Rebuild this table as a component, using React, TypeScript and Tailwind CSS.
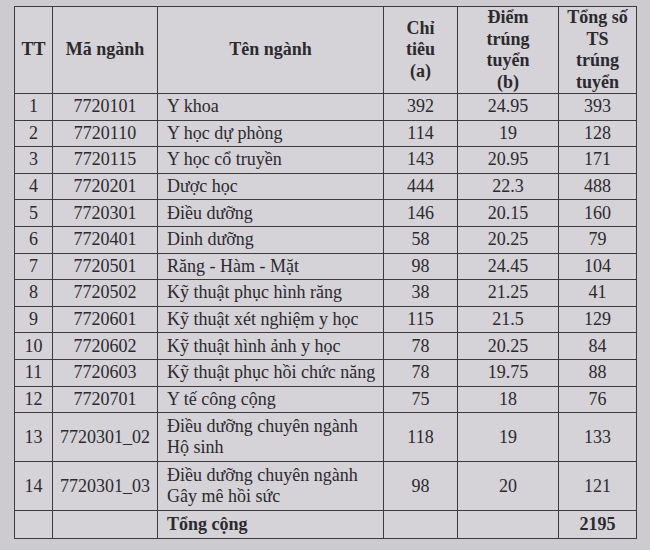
import React from "react";

interface Nganh {
  tt: number;
  ma: string;
  ten: string[];
  chiTieu: number;
  diem: string;
  tong: number;
}

const rows: Nganh[] = [
  { tt: 1, ma: "7720101", ten: ["Y khoa"], chiTieu: 392, diem: "24.95", tong: 393 },
  { tt: 2, ma: "7720110", ten: ["Y học dự phòng"], chiTieu: 114, diem: "19", tong: 128 },
  { tt: 3, ma: "7720115", ten: ["Y học cổ truyền"], chiTieu: 143, diem: "20.95", tong: 171 },
  { tt: 4, ma: "7720201", ten: ["Dược học"], chiTieu: 444, diem: "22.3", tong: 488 },
  { tt: 5, ma: "7720301", ten: ["Điều dưỡng"], chiTieu: 146, diem: "20.15", tong: 160 },
  { tt: 6, ma: "7720401", ten: ["Dinh dưỡng"], chiTieu: 58, diem: "20.25", tong: 79 },
  { tt: 7, ma: "7720501", ten: ["Răng - Hàm - Mặt"], chiTieu: 98, diem: "24.45", tong: 104 },
  { tt: 8, ma: "7720502", ten: ["Kỹ thuật phục hình răng"], chiTieu: 38, diem: "21.25", tong: 41 },
  { tt: 9, ma: "7720601", ten: ["Kỹ thuật xét nghiệm y học"], chiTieu: 115, diem: "21.5", tong: 129 },
  { tt: 10, ma: "7720602", ten: ["Kỹ thuật hình ảnh y học"], chiTieu: 78, diem: "20.25", tong: 84 },
  { tt: 11, ma: "7720603", ten: ["Kỹ thuật phục hồi chức năng"], chiTieu: 78, diem: "19.75", tong: 88 },
  { tt: 12, ma: "7720701", ten: ["Y tế công cộng"], chiTieu: 75, diem: "18", tong: 76 },
  { tt: 13, ma: "7720301_02", ten: ["Điều dưỡng chuyên ngành", "Hộ sinh"], chiTieu: 118, diem: "19", tong: 133 },
  { tt: 14, ma: "7720301_03", ten: ["Điều dưỡng chuyên ngành", "Gây mê hồi sức"], chiTieu: 98, diem: "20", tong: 121 },
];

const cell = "border border-[#3b3a3e] px-1 text-center align-middle";

export default function App() {
  return (
    <div className="w-[650px] h-[550px] overflow-hidden bg-[#cdcad0] pt-[6px] pl-[14px] text-[#2b2a2e] font-serif text-[18px] leading-[21px]">
      <table className="border-collapse w-[622px] table-fixed bg-[#d5d2d8] [font-family:Liberation_Serif,serif]">
        <colgroup>
          <col className="w-[38px]" />
          <col className="w-[105px]" />
          <col className="w-[226px]" />
          <col className="w-[74px]" />
          <col className="w-[101px]" />
          <col className="w-[78px]" />
        </colgroup>
        <thead>
          <tr className="h-[87px] font-bold leading-[21.5px]">
            <th className={cell}>TT</th>
            <th className={cell}>Mã ngành</th>
            <th className={cell}>Tên ngành</th>
            <th className={cell}>
              Chỉ
              <br />
              tiêu
              <br />
              (a)
            </th>
            <th className={cell}>
              Điểm
              <br />
              trúng
              <br />
              tuyển
              <br />
              (b)
            </th>
            <th className={cell}>
              Tổng số
              <br />
              TS
              <br />
              trúng
              <br />
              tuyển
            </th>
          </tr>
        </thead>
        <tbody>
          {rows.map((r) => (
            <tr key={r.tt} className={r.ten.length > 1 ? "h-[49px]" : "h-[26.6px]"}>
              <td className={cell}>{r.tt}</td>
              <td className={cell + " whitespace-nowrap"}>{r.ma}</td>
              <td className="border border-[#3b3a3e] pl-[9px] pr-1 text-left align-middle whitespace-nowrap">
                {r.ten.map((t, i) => (
                  <div key={i}>{t}</div>
                ))}
              </td>
              <td className={cell}>{r.chiTieu}</td>
              <td className={cell}>{r.diem}</td>
              <td className={cell}>{r.tong}</td>
            </tr>
          ))}
          <tr className="h-[28px] font-bold">
            <td className={cell}></td>
            <td className={cell}></td>
            <td className="border border-[#3b3a3e] pl-[9px] text-left align-middle">Tổng cộng</td>
            <td className={cell}></td>
            <td className={cell}></td>
            <td className={cell}>2195</td>
          </tr>
        </tbody>
      </table>
    </div>
  );
}
